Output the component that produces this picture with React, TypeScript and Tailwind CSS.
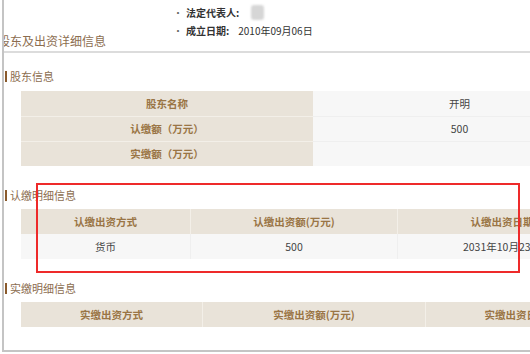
import React from 'react';

const shareholder = [
  { label: '股东名称', value: '开明' },
  { label: '认缴额（万元）', value: '500' },
  { label: '实缴额（万元）', value: '' },
];

function SectionTitle({ text }: { text: string }) {
  return (
    <div className="flex h-[16px] items-center pl-[1px]">
      <span className="h-[11px] w-[2px] bg-[#8a5a2c]" />
      <span className="ml-[3px] text-[11px] leading-[16px] text-[#8c6d4f]">{text}</span>
    </div>
  );
}

function HeadCell({ children, className = '' }: { children?: React.ReactNode; className?: string }) {
  return (
    <div
      className={`flex h-[25px] items-center justify-center bg-[#e9e3d9] text-[10.5px] font-bold text-[#9a7545] ${className}`}
    >
      {children}
    </div>
  );
}

function DataCell({ children, className = '' }: { children?: React.ReactNode; className?: string }) {
  return (
    <div className={`flex h-[25px] items-center justify-center bg-[#f7f7f7] text-[10.5px] text-[#444] ${className}`}>
      {children}
    </div>
  );
}

export default function App() {
  return (
    <div className="relative h-[354px] w-[530px] overflow-hidden bg-white font-['Noto_Sans_CJK_SC',sans-serif]">
      <div className="ml-[2px] h-[352px] border-b-2 border-l-2 border-[#c4c4c4]">
        {/* company summary + block heading */}
        <div className="flex h-[53px] border-b-2 border-[#dcdcdc]">
          <div className="flex w-[169px] items-end overflow-hidden pb-[2px]">
            <span className="-ml-[6px] whitespace-nowrap text-[12px] leading-[16px] text-[#8c6d4f]">
              股东及出资详细信息
            </span>
          </div>
          <div className="flex flex-col gap-[4px] pt-[5px] text-[10px] leading-[14px] text-[#333]">
            <div className="flex items-center gap-[3px]">
              <span className="text-[#666]">·</span>
              <span className="font-bold">法定代表人:</span>
              <span className="ml-[9px] h-[15px] w-[13px] rounded-[3px] bg-[#d6d6d6] blur-[1px]" />
            </div>
            <div className="flex items-center gap-[3px]">
              <span className="text-[#666]">·</span>
              <span className="font-bold">成立日期:</span>
              <span className="ml-[6px]">2010年09月06日</span>
            </div>
          </div>
        </div>

        <div className="mt-[15px]">
          <SectionTitle text="股东信息" />
        </div>
        <div className="ml-[17px] mt-[7px] grid w-[585px] grid-cols-[292px_293px]">
          {shareholder.map((r, i) => (
            <React.Fragment key={r.label}>
              <HeadCell className={i > 0 ? 'border-t border-[#f3efe8]' : ''}>{r.label}</HeadCell>
              <DataCell className={i > 0 ? 'border-t border-[#efefef]' : ''}>{r.value}</DataCell>
            </React.Fragment>
          ))}
        </div>

        <div className="mt-[21px]">
          <SectionTitle text="认缴明细信息" />
        </div>
        <div className="ml-[17px] mt-[6px] grid w-[585px] grid-cols-[169px_207px_209px]">
          <HeadCell>认缴出资方式</HeadCell>
          <HeadCell className="border-l border-[#f3efe8]">认缴出资额(万元)</HeadCell>
          <HeadCell className="border-l border-[#f3efe8]">认缴出资日期</HeadCell>
          <DataCell>货币</DataCell>
          <DataCell className="border-l border-[#efefef]">500</DataCell>
          <DataCell className="border-l border-[#efefef]">2031年10月23日</DataCell>
        </div>

        <div className="mt-[21px]">
          <SectionTitle text="实缴明细信息" />
        </div>
        <div className="ml-[17px] mt-[6px] grid w-[585px] grid-cols-[181px_223px_181px]">
          <HeadCell>实缴出资方式</HeadCell>
          <HeadCell className="border-l border-[#f3efe8]">实缴出资额(万元)</HeadCell>
          <HeadCell className="border-l border-[#f3efe8]">实缴出资日期</HeadCell>
        </div>
      </div>

      {/* red marker around the subscription table */}
      <div className="absolute left-[36px] top-[183px] h-[90px] w-[484px] border-2 border-[#ee2a2a]" />
    </div>
  );
}
